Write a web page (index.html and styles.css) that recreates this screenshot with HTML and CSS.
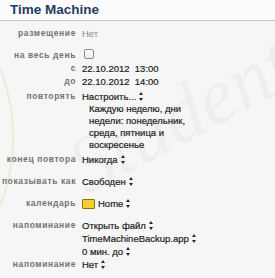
FILE: index.html
```html
<!DOCTYPE html>
<html lang="ru">
<head>
    <meta charset="UTF-8">
    <meta name="viewport" content="width=device-width, initial-scale=1.0">
    <title>Time Machine</title>
    <link rel="stylesheet" href="styles.css">
</head>
<body>
    <div class="event">
        <h1 class="event-title">Time Machine</h1>

        <div class="group">
            <div class="row">
                <span class="label">размещение</span>
                <span class="value muted">Нет</span>
            </div>
        </div>

        <div class="group group-wide">
            <div class="row">
                <span class="label">на весь день</span>
                <span class="value"><span class="checkbox"></span></span>
            </div>
            <div class="row">
                <span class="label">с</span>
                <span class="value">22.10.2012&nbsp; 13:00</span>
            </div>
            <div class="row">
                <span class="label">до</span>
                <span class="value">22.10.2012&nbsp; 14:00</span>
            </div>
            <div class="row row-gap">
                <span class="label">повторять</span>
                <span class="value">Настроить... <span class="stepper"></span></span>
            </div>
            <div class="row">
                <span class="label"></span>
                <span class="value note">Каждую неделю, дни недели: понедельник, среда, пятница и воскресенье</span>
            </div>
            <div class="row row-gap">
                <span class="label">конец повтора</span>
                <span class="value">Никогда <span class="stepper"></span></span>
            </div>
        </div>

        <div class="group group-wide">
            <div class="row">
                <span class="label">показывать как</span>
                <span class="value">Свободен <span class="stepper"></span></span>
            </div>
        </div>

        <div class="group group-wide">
            <div class="row">
                <span class="label">календарь</span>
                <span class="value"><span class="swatch"></span> Home <span class="stepper"></span></span>
            </div>
        </div>

        <div class="group group-wide">
            <div class="row">
                <span class="label">напоминание</span>
                <span class="value">Открыть файл <span class="stepper"></span></span>
            </div>
            <div class="row">
                <span class="label"></span>
                <span class="value">TimeMachineBackup.app <span class="stepper"></span></span>
            </div>
            <div class="row">
                <span class="label"></span>
                <span class="value">0 мин. до <span class="stepper"></span></span>
            </div>
            <div class="row">
                <span class="label">напоминание</span>
                <span class="value">Нет <span class="stepper"></span></span>
            </div>
        </div>

        <!-- водяной знак -->
        <div class="watermark" aria-hidden="true">Student</div>
        <div class="watermark-ring" aria-hidden="true"></div>
    </div>
</body>
</html>
```

FILE: styles.css
```css
/* общий фон */
body {
    margin: 0;
    padding: 0;
    background-color: #f6f6f6;
    font-family: "Liberation Sans", Arial, sans-serif;
    color: #1c1c1c;
}

.event {
    position: relative;
    width: 275px;
    height: 278px;
    overflow: hidden;
}

.event-title {
    margin: 0;
    padding: 2px 0 0 10px;
    height: 18px;
    font-size: 13.5px;
    line-height: 16px;
    font-weight: bold;
    color: #1f3c62;
    background-color: #fcfcfc;
    border-bottom: 1px solid #c4c4c4;
}

/* строки формы */
.group {
    margin-top: 6px;
}

.group-wide {
    margin-top: 9px;
}

.row {
    display: flex;
    align-items: flex-start;
    line-height: 13px;
}

.row-gap {
    margin-top: 2px;
}

.label {
    flex: 0 0 76px;
    text-align: right;
    padding-right: 6px;
    white-space: nowrap;
    font-size: 8.5px;
    font-weight: bold;
    letter-spacing: 0.6px;
    color: #737373;
}

.value {
    display: flex;
    align-items: center;
    gap: 3px;
    white-space: nowrap;
    font-size: 9.5px;
    -webkit-text-stroke: 0.2px #1c1c1c;
}

.muted {
    color: #8a8a8a;
    -webkit-text-stroke: 0;
}

.note {
    display: block;
    width: 104px;
    padding-left: 7px;
    white-space: normal;
    font-size: 9.5px;
    line-height: 12px;
}

.checkbox {
    display: inline-block;
    width: 8px;
    height: 8px;
    margin-left: 2px;
    border: 1px solid #8c8c8c;
    border-radius: 2px;
    background: linear-gradient(#ffffff, #ececec);
}

.swatch {
    display: inline-block;
    width: 11px;
    height: 8px;
    border: 1px solid #8a7414;
    border-radius: 1px;
    background-color: #f3cf2f;
}

/* стрелки выбора */
.stepper {
    position: relative;
    display: inline-block;
    width: 5px;
    height: 9px;
}

.stepper::before,
.stepper::after {
    content: "";
    position: absolute;
    left: 0;
    border-left: 2.5px solid transparent;
    border-right: 2.5px solid transparent;
}

.stepper::before {
    top: 0;
    border-bottom: 3px solid #2a2a2a;
}

.stepper::after {
    bottom: 0;
    border-top: 3px solid #2a2a2a;
}

/* водяной знак */
.watermark {
    position: absolute;
    left: 60px;
    top: 70px;
    font-family: "Liberation Serif", serif;
    font-size: 80px;
    font-style: italic;
    color: rgba(0, 0, 0, 0.03);
    transform: rotate(-28deg);
    pointer-events: none;
}

.watermark-ring {
    position: absolute;
    left: -150px;
    top: 10px;
    width: 160px;
    height: 250px;
    border: 2px solid rgba(190, 200, 120, 0.22);
    border-radius: 50%;
    pointer-events: none;
}
```
